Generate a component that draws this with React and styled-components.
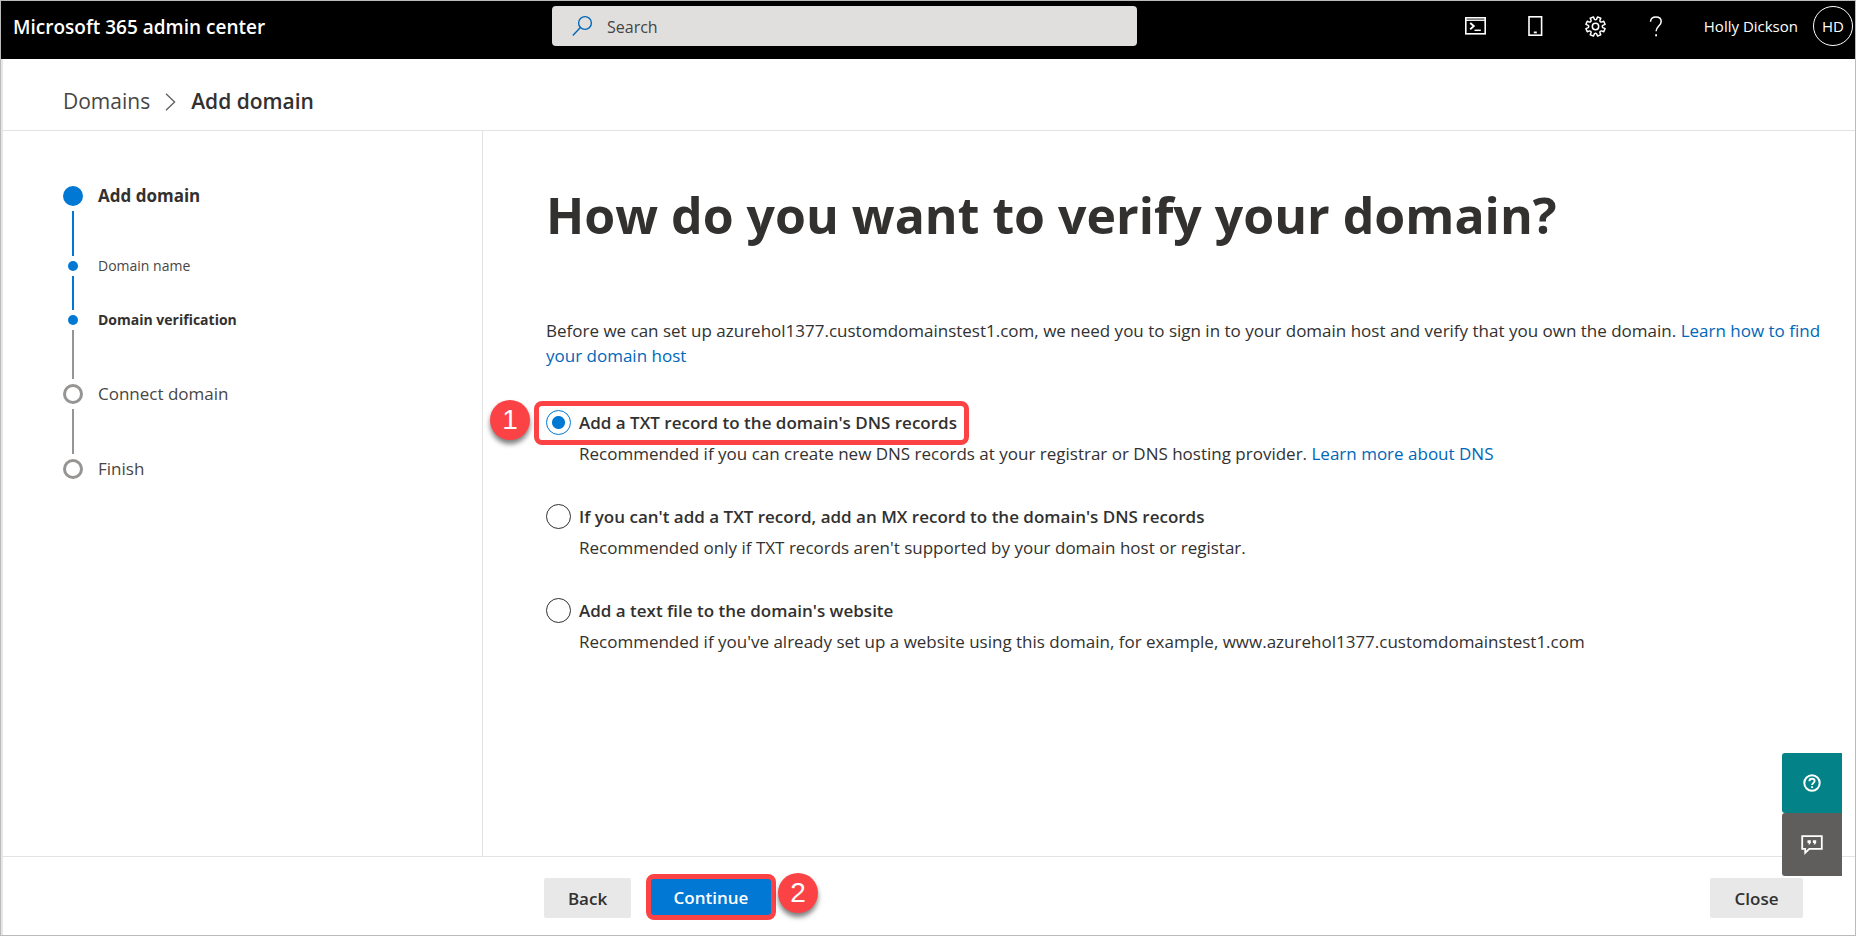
import React, { useState } from "react";
import styled, { createGlobalStyle, css } from "styled-components";

const GlobalStyle = createGlobalStyle`
  *, *::before, *::after { box-sizing: border-box; }
  body {
    margin: 0;
    background: #fff;
    color: #323130;
    font-family: "Open Sans", "Noto Sans", sans-serif;
    font-size: 17px;
    line-height: 25px;
  }
  button, input { font: inherit; color: inherit; }
  h1, p, ol { margin: 0; padding: 0; }
`;

const Page = styled.div`
  display: flex;
  flex-direction: column;
  min-height: 100vh;
  border: 1px solid #bbb;
`;

const Header = styled.header`
  display: grid;
  grid-template-columns: 551px minmax(200px, 585px) 1fr;
  align-items: center;
  height: 58px;
  padding-bottom: 8px;
  background: #000;
  color: #fff;
`;

const Brand = styled.div`
  padding: 2px 0 0 12px;
  font-size: 19px;
  font-weight: 600;
`;

const SearchBox = styled.label`
  display: flex;
  align-items: center;
  gap: 13px;
  height: 40px;
  padding-left: 20px;
  border-radius: 4px;
  background: #e1dfdd;
  color: #333;
`;

const SearchInput = styled.input`
  flex: 1;
  min-width: 0;
  padding: 2px 0 0;
  border: 0;
  outline: 0;
  background: transparent;
  font-size: 16px;
  &::placeholder { color: #444; opacity: 1; }
`;

const HeaderTools = styled.div`
  display: flex;
  align-items: center;
  justify-content: flex-end;
  padding-right: 2px;
`;

const ToolButton = styled.button`
  display: grid;
  place-items: center;
  width: 60px;
  height: 40px;
  padding: 0;
  border: 0;
  background: transparent;
  color: #fff;
`;

const UserButton = styled.button`
  display: flex;
  align-items: center;
  gap: 15px;
  margin-left: 18px;
  padding: 0;
  border: 0;
  background: transparent;
  color: #fff;
  font-size: 15px;
`;

const Avatar = styled.span`
  display: grid;
  place-items: center;
  width: 40px;
  height: 40px;
  border: 1px solid #fff;
  border-radius: 50%;
`;

const Body = styled.div`
  display: flex;
  flex: 1;
  flex-direction: column;
  border-left: 2px solid #e6e6e6;
`;

const Breadcrumb = styled.nav`
  display: flex;
  align-items: center;
  gap: 15px;
  height: 72px;
  padding: 14px 0 0 60px;
  border-bottom: 1px solid #e3e3e3;
  font-size: 21px;
  a { color: #484644; text-decoration: none; }
  span { font-weight: 600; }
`;

const Columns = styled.div`
  display: flex;
  flex: 1;
`;

const Sidebar = styled.aside`
  flex: 0 0 480px;
  padding: 55px 0 0 60px;
  border-right: 1px solid #e3e3e3;
`;

const StepList = styled.ol`
  list-style: none;
`;

const StepItem = styled.li`
  display: grid;
  grid-template-columns: 20px 1fr;
  column-gap: 15px;
`;

const Track = styled.div`
  display: flex;
  flex-direction: column;
  align-items: center;
  gap: 5px;
`;

const Marker = styled.span`
  width: ${(p) => (p.$small ? 10 : 20)}px;
  height: ${(p) => (p.$small ? 10 : 20)}px;
  border-radius: 50%;
  ${(p) =>
    p.$active
      ? css`background: #0078d4;`
      : css`border: 3px solid #979593;`}
`;

const Connector = styled.span`
  width: 2px;
  height: ${(p) => p.$length}px;
  margin-bottom: 5px;
  background: ${(p) => (p.$active ? "#0078d4" : "#979593")};
`;

const StepText = styled.span`
  height: ${(p) => (p.$small ? 10 : 20)}px;
  line-height: ${(p) => (p.$small ? 10 : 20)}px;
  font-size: ${(p) => (p.$small ? 14 : 17)}px;
  font-weight: ${(p) => (p.$bold ? 700 : 400)};
  color: ${(p) => (p.$bold ? "#323130" : "#484644")};
`;

const Main = styled.main`
  flex: 1;
  min-width: 0;
  padding: 49px 24px 40px 63px;
`;

const Title = styled.h1`
  font-size: 50px;
  font-weight: 700;
  line-height: 70px;
`;

const Intro = styled.p`
  margin-top: 68px;
`;

const Link = styled.a`
  color: #0067b8;
  text-decoration: none;
`;

const Options = styled.div`
  display: flex;
  flex-direction: column;
  gap: 34px;
  margin-top: 38px;
`;

const OptionLabel = styled.label`
  position: relative;
  display: flex;
  align-items: center;
  gap: 8px;
  width: fit-content;
  height: 32px;
  font-weight: 600;
`;

const Radio = styled.input`
  appearance: none;
  flex: none;
  width: 25px;
  height: 25px;
  margin: 0;
  border: 1px solid #323130;
  border-radius: 50%;
  background: #fff;
  &:checked {
    border-color: #0078d4;
    background: radial-gradient(circle, #0078d4 6px, #fff 7px);
  }
`;

const OptionHint = styled.p`
  height: 28px;
  padding-left: 33px;
  line-height: 32px;
`;

const Highlight = styled.span`
  position: absolute;
  inset: -5px -12px -7px -12px;
  border: 5px solid #fb4346;
  border-radius: 8px;
  pointer-events: none;
`;

const Badge = styled.span`
  position: absolute;
  ${(p) =>
    p.$side === "left"
      ? css`left: -56px; top: -6px;`
      : css`left: calc(100% + 2px); top: -1px;`}
  display: grid;
  place-items: center;
  width: 40px;
  height: 40px;
  border-radius: 50%;
  background: #fb4346;
  box-shadow: 0 4px 5px rgba(0, 0, 0, 0.5);
  color: #fff;
  font: 400 28px/40px "Liberation Sans", sans-serif;
`;

const Footer = styled.footer`
  display: flex;
  align-items: center;
  height: 79px;
  padding: 4px 52px 0 541px;
  border-top: 1px solid #e3e3e3;
`;

const Button = styled.button`
  height: ${(p) => (p.$primary ? 46 : 40)}px;
  min-width: ${(p) => p.$width}px;
  padding: 0;
  border: ${(p) => (p.$primary ? "5px solid #fb4346" : "0")};
  border-radius: ${(p) => (p.$primary ? 8 : 2)}px;
  background: ${(p) => (p.$primary ? "#0078d4" : "#e8e8e8")};
  color: ${(p) => (p.$primary ? "#fff" : "#323130")};
  font-weight: 600;
`;

const PrimarySlot = styled.div`
  position: relative;
  display: flex;
  margin: 0 auto 0 15px;
  padding-bottom: 2px;
`;

const HelpDock = styled.div`
  position: fixed;
  right: 14px;
  bottom: 60px;
  display: flex;
  flex-direction: column;
`;

const DockButton = styled.button`
  display: grid;
  place-items: center;
  width: 60px;
  height: ${(p) => p.$height}px;
  padding: 0;
  border: 0;
  border-radius: 3px 0 0 3px;
  background: ${(p) => p.$color};
  color: #fff;
`;

const SearchIcon = () => (
  <svg width="22" height="22" viewBox="0 0 22 22" fill="none" stroke="#0067b8" strokeWidth="1.4" aria-hidden="true">
    <circle cx="13" cy="8" r="6.4" />
    <path d="M8.4 12.6 .8 20.4" />
  </svg>
);

const TerminalIcon = () => (
  <svg width="21" height="18" viewBox="0 0 21 18" fill="none" stroke="currentColor" aria-hidden="true">
    <rect x=".8" y=".8" width="19.4" height="16" strokeWidth="1.6" />
    <path d="M1 3.2h19" strokeWidth="1.4" />
    <path d="m5.2 6 3.6 3.1-3.6 3.1" strokeWidth="1.9" />
    <path d="M9.5 13.3h6.3" strokeWidth="1.5" />
  </svg>
);

const PhoneIcon = () => (
  <svg width="15" height="20" viewBox="0 0 15 20" fill="none" stroke="currentColor" aria-hidden="true">
    <rect x="1" y=".8" width="12.6" height="18.4" strokeWidth="1.6" />
    <path d="M5.8 16.4h3" strokeWidth="1.8" />
  </svg>
);

const gearPath = Array.from({ length: 8 }, (_, i) => {
  const point = (deg, r) => {
    const a = ((i * 45 + 22.5 + deg) * Math.PI) / 180;
    return `${(10.5 + r * Math.cos(a)).toFixed(2)} ${(10.5 + r * Math.sin(a)).toFixed(2)}`;
  };
  return `${i ? "L" : "M"}${point(-14, 7.4)}L${point(-10, 9.8)}L${point(10, 9.8)}L${point(14, 7.4)}Q${point(22.5, 6.2)} ${point(31, 7.4)}`;
}).join("") + "Z";

const GearIcon = () => (
  <svg width="21" height="21" viewBox="0 0 21 21" fill="none" stroke="currentColor" strokeWidth="1.5" strokeLinejoin="round" aria-hidden="true">
    <path d={gearPath} />
    <circle cx="10.5" cy="10.5" r="3.2" />
  </svg>
);

const QuestionIcon = () => (
  <svg width="14" height="21" viewBox="0 0 14 21" fill="none" stroke="currentColor" strokeWidth="1.5" aria-hidden="true">
    <path d="M1.5 5.8C1.6 2.8 3.8.9 6.9.9c3.2 0 5.3 1.8 5.3 4.5 0 4.6-5.1 4.8-5.1 9.9" />
    <path d="M7.1 18.2v2" strokeWidth="1.8" />
  </svg>
);

const ChevronIcon = () => (
  <svg width="11" height="18" viewBox="0 0 11 18" fill="none" stroke="#605e5c" strokeWidth="1.3" aria-hidden="true">
    <path d="m1 .8 8.6 8.2L1 17.2" />
  </svg>
);

const HelpCircleIcon = () => (
  <svg width="18" height="18" viewBox="0 0 18 18" fill="none" stroke="currentColor" aria-hidden="true">
    <circle cx="9" cy="9" r="7.7" strokeWidth="2" />
    <path d="M6.4 7.3c0-1.6 1-2.5 2.6-2.5s2.6.9 2.6 2.2c0 1.9-2.5 1.9-2.5 4.1M9.1 12.2v1.9" strokeWidth="1.9" />
  </svg>
);

const FeedbackIcon = () => (
  <svg width="22" height="20" viewBox="0 0 22 20" fill="none" stroke="currentColor" aria-hidden="true">
    <path d="M1.2 1.2h19.6v12.6H8.3l-4.1 4v-4h-3z" strokeWidth="1.8" />
    <path d="M6.5 5.3h3.3v2.5L8.5 9.6H7.3l.6-1.6H6.5zM11.9 5.3h3.3v2.5l-1.3 1.8h-1.2l.6-1.6h-1.4z" fill="currentColor" stroke="none" />
  </svg>
);

const steps = [
  { text: "Add domain", active: true, bold: true, length: 45 },
  { text: "Domain name", active: true, small: true, length: 34 },
  { text: "Domain verification", active: true, small: true, bold: true, length: 49, nextPending: true },
  { text: "Connect domain", length: 45 },
  { text: "Finish" },
];

const options = [
  {
    id: "txt",
    label: "Add a TXT record to the domain's DNS records",
    hint: "Recommended if you can create new DNS records at your registrar or DNS hosting provider. ",
    link: "Learn more about DNS",
    callout: "1",
  },
  {
    id: "mx",
    label: "If you can't add a TXT record, add an MX record to the domain's DNS records",
    hint: "Recommended only if TXT records aren't supported by your domain host or registar.",
  },
  {
    id: "file",
    label: "Add a text file to the domain's website",
    hint: "Recommended if you've already set up a website using this domain, for example, www.azurehol1377.customdomainstest1.com",
  },
];

export default function App() {
  const [method, setMethod] = useState("txt");

  return (
    <>
      <GlobalStyle />
      <Page>
        <Header>
          <Brand>Microsoft 365 admin center</Brand>
          <SearchBox>
            <SearchIcon />
            <SearchInput type="search" placeholder="Search" aria-label="Search" />
          </SearchBox>
          <HeaderTools>
            <ToolButton aria-label="Cloud Shell"><TerminalIcon /></ToolButton>
            <ToolButton aria-label="Mobile app"><PhoneIcon /></ToolButton>
            <ToolButton aria-label="Settings"><GearIcon /></ToolButton>
            <ToolButton aria-label="Help"><QuestionIcon /></ToolButton>
            <UserButton>
              Holly Dickson
              <Avatar>HD</Avatar>
            </UserButton>
          </HeaderTools>
        </Header>
        <Body>
          <Breadcrumb aria-label="Breadcrumb">
            <a href="#domains">Domains</a>
            <ChevronIcon />
            <span>Add domain</span>
          </Breadcrumb>
          <Columns>
            <Sidebar>
              <StepList>
                {steps.map((s) => (
                  <StepItem key={s.text}>
                    <Track>
                      <Marker $small={s.small} $active={s.active} />
                      {s.length && <Connector $length={s.length} $active={s.active && !s.nextPending} />}
                    </Track>
                    <StepText $small={s.small} $bold={s.bold}>{s.text}</StepText>
                  </StepItem>
                ))}
              </StepList>
            </Sidebar>
            <Main>
              <Title>How do you want to verify your domain?</Title>
              <Intro>
                Before we can set up azurehol1377.customdomainstest1.com, we need you to sign in to your domain host and
                verify that you own the domain. <Link href="#find-host">Learn how to find your domain host</Link>
              </Intro>
              <Options role="radiogroup" aria-label="Verification method">
                {options.map((o) => (
                  <div key={o.id}>
                    <OptionLabel>
                      <Radio
                        type="radio"
                        name="method"
                        value={o.id}
                        checked={method === o.id}
                        onChange={() => setMethod(o.id)}
                      />
                      {o.label}
                      {o.callout && <Highlight />}
                      {o.callout && <Badge $side="left">{o.callout}</Badge>}
                    </OptionLabel>
                    <OptionHint>
                      {o.hint}
                      {o.link && <Link href="#dns">{o.link}</Link>}
                    </OptionHint>
                  </div>
                ))}
              </Options>
            </Main>
          </Columns>
          <Footer>
            <Button $width={87}>Back</Button>
            <PrimarySlot>
              <Button $primary $width={130}>Continue</Button>
              <Badge $side="right">2</Badge>
            </PrimarySlot>
            <Button $width={93}>Close</Button>
          </Footer>
        </Body>
        <HelpDock>
          <DockButton $height={60} $color="#038387" aria-label="Help"><HelpCircleIcon /></DockButton>
          <DockButton $height={63} $color="#605e5c" aria-label="Give feedback"><FeedbackIcon /></DockButton>
        </HelpDock>
      </Page>
    </>
  );
}
